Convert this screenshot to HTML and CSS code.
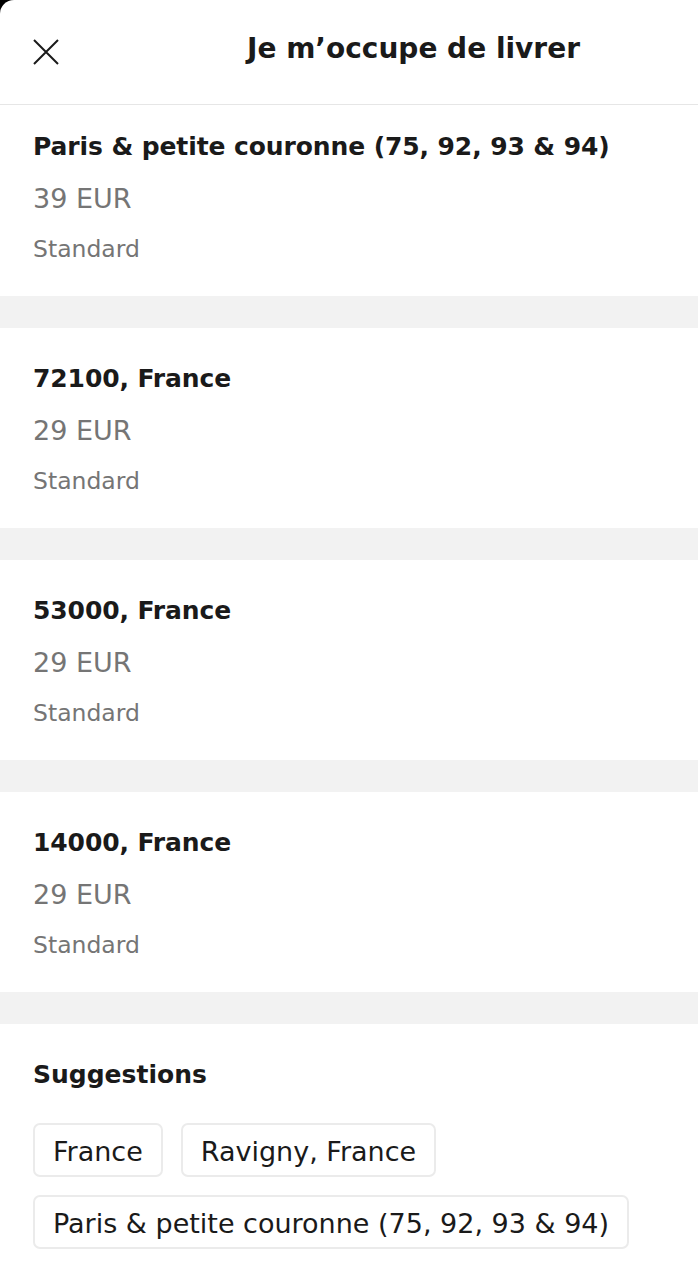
FILE: index.html
```html
<!doctype html>
<html lang="fr">
<head>
    <meta charset="UTF-8">
    <meta name="viewport" content="width=device-width, initial-scale=1.0">
    <title>Je m'occupe de livrer</title>
    <link rel="stylesheet" href="styles.css">
</head>
<body>
    <div class="sheet">
        <div class="header">
            <button class="close-btn" aria-label="Fermer">
                <svg width="28" height="28" viewBox="0 0 28 28">
                    <path d="M2 2 L26 26 M26 2 L2 26" stroke="#1a1a1a" stroke-width="2" fill="none"/>
                </svg>
            </button>
            <div class="header-title">Je m’occupe de livrer</div>
        </div>

        <div class="zone zone-first">
            <div class="zone-name">Paris &amp; petite couronne (75, 92, 93 &amp; 94)</div>
            <div class="zone-price">39 EUR</div>
            <div class="zone-type">Standard</div>
        </div>
        <div class="divider"></div>

        <div class="zone">
            <div class="zone-name">72100, France</div>
            <div class="zone-price">29 EUR</div>
            <div class="zone-type">Standard</div>
        </div>
        <div class="divider"></div>

        <div class="zone">
            <div class="zone-name">53000, France</div>
            <div class="zone-price">29 EUR</div>
            <div class="zone-type">Standard</div>
        </div>
        <div class="divider"></div>

        <div class="zone">
            <div class="zone-name">14000, France</div>
            <div class="zone-price">29 EUR</div>
            <div class="zone-type">Standard</div>
        </div>
        <div class="divider"></div>

        <!-- Suggestions -->
        <div class="suggestions">
            <div class="suggestions-title">Suggestions</div>
            <div class="chips">
                <button class="chip">France</button>
                <button class="chip">Ravigny, France</button>
                <button class="chip">Paris &amp; petite couronne (75, 92, 93 &amp; 94)</button>
            </div>
        </div>
    </div>
</body>
</html>
```

FILE: styles.css
```css
body {
    margin: 0;
    padding: 0;
    background: #000;
    font-family: "DejaVu Sans", Inter, Arial, sans-serif;
    color: #1a1a1a;
}

.sheet {
    background: #fff;
    min-height: 1265px;
    border-top-left-radius: 14px;
}

.header {
    display: flex;
    align-items: center;
    height: 104px;
    border-bottom: 1px solid #e6e6e6;
    padding-left: 31px;
}

.close-btn {
    background: none;
    border: none;
    padding: 0;
    width: 30px;
    height: 30px;
    display: flex;
    align-items: center;
    justify-content: center;
    cursor: pointer;
}

.header-title {
    margin-left: 186px;
    font-size: 28px;
    font-weight: 700;
    margin-top: -8px;
}

.zone {
    padding: 33px 33px 32px;
    display: flex;
    flex-direction: column;
}

.zone-first {
    padding-top: 24px;
}

.zone-name {
    font-size: 25px;
    font-weight: 700;
    line-height: 36px;
    letter-spacing: -0.1px;
}

.zone-price {
    font-size: 27px;
    line-height: 36px;
    color: #757575;
    margin-top: 16px;
}

.zone-type {
    font-size: 23.5px;
    line-height: 30px;
    color: #757575;
    margin-top: 17px;
}

.divider {
    height: 32px;
    background: #f2f2f2;
}

.suggestions {
    padding: 33px 33px 20px;
}

.suggestions-title {
    font-size: 25px;
    font-weight: 700;
    line-height: 36px;
}

.chips {
    display: flex;
    flex-wrap: wrap;
    gap: 18px;
    margin-top: 30px;
}

.chip {
    background: #fff;
    border: 2px solid #ebebeb;
    border-radius: 7px;
    height: 54px;
    padding: 2px 18px 0;
    font-family: inherit;
    font-size: 27px;
    color: #1a1a1a;
    cursor: pointer;
}
```
